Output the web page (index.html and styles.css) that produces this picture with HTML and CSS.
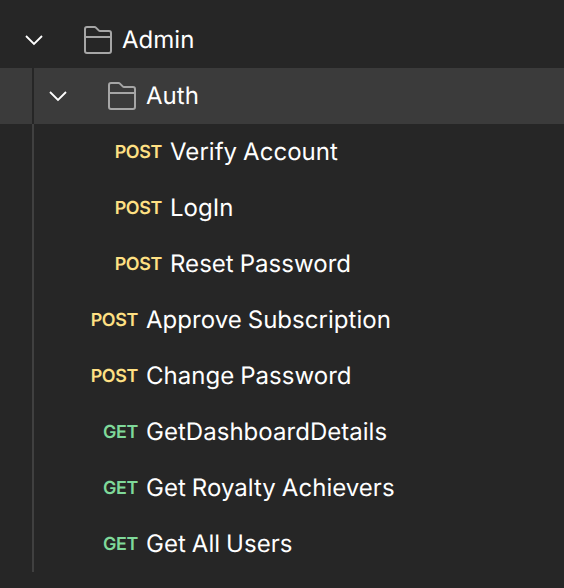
FILE: index.html
```html
<!DOCTYPE html>
<html lang="en">
<head>
<meta charset="utf-8">
<title>Collections</title>
<link rel="stylesheet" href="styles.css">
</head>
<body>
<ul class="tree">
  <li class="row">
    <svg class="chevron" viewBox="0 0 24 24"><path d="M4 8l8 8 8-8"/></svg>
    <svg class="folder" viewBox="0 0 30 30"><path d="M2 26V4a2 2 0 0 1 2-2h7.500a2 2 0 0 1 1.400.600l2.800 2.800a2 2 0 0 0 1.400.600H26a2 2 0 0 1 2 2v18a2 2 0 0 1-2 2H4a2 2 0 0 1-2-2zM2 12h26"/></svg>
    <span class="name">Admin</span>
  </li>
  <li>
    <ul class="children">
      <li class="row selected">
        <svg class="chevron" viewBox="0 0 24 24"><path d="M4 8l8 8 8-8"/></svg>
        <svg class="folder" viewBox="0 0 30 30"><path d="M2 26V4a2 2 0 0 1 2-2h7.500a2 2 0 0 1 1.400.600l2.800 2.800a2 2 0 0 0 1.400.600H26a2 2 0 0 1 2 2v18a2 2 0 0 1-2 2H4a2 2 0 0 1-2-2zM2 12h26"/></svg>
        <span class="name">Auth</span>
      </li>
      <li class="row nested"><span class="method post">POST</span><span class="name">Verify Account</span></li>
      <li class="row nested"><span class="method post">POST</span><span class="name">LogIn</span></li>
      <li class="row nested"><span class="method post">POST</span><span class="name">Reset Password</span></li>
      <li class="row"><span class="method post">POST</span><span class="name">Approve Subscription</span></li>
      <li class="row"><span class="method post">POST</span><span class="name">Change Password</span></li>
      <li class="row"><span class="method get">GET</span><span class="name">GetDashboardDetails</span></li>
      <li class="row"><span class="method get">GET</span><span class="name">Get Royalty Achievers</span></li>
      <li class="row"><span class="method get">GET</span><span class="name">Get All Users</span></li>
    </ul>
  </li>
</ul>
</body>
</html>
```

FILE: styles.css
```css
body {
  margin: 0;
  height: 588px;
  background: #262626;
  color: #fff;
  font-family: Inter, sans-serif;
  text-rendering: geometricPrecision;
  overflow: hidden;
}

ul {
  margin: 0;
  padding: 0;
  list-style: none;
}

.tree {
  padding-top: 12px;
}

.row {
  display: flex;
  align-items: center;
  height: 56px;
  padding-left: 22px;
}

.children {
  background: linear-gradient(#404040, #404040) 32px 0 / 2px 100% no-repeat;
}

.children .row {
  padding-left: 46px;
}

.selected {
  background: linear-gradient(90deg, transparent 32px, #262626 32px 34px, transparent 34px), #3b3b3b;
}

.chevron {
  width: 24px;
  height: 24px;
  margin-right: 37px;
  fill: none;
  stroke: #fff;
  stroke-width: 1.8;
}

.folder {
  width: 30px;
  height: 30px;
  margin-right: 9px;
  fill: none;
  stroke: #a6a6a6;
  stroke-width: 2;
}

.name {
  padding-bottom: 2px;
  font-size: 24px;
  font-weight: 370;
  letter-spacing: 0.03px;
  word-spacing: -0.8px;
  white-space: nowrap;
}

.method {
  width: 92px;
  margin-right: 8px;
  padding-top: 2px;
  text-align: right;
  font-size: 17.900px;
  font-weight: 600;
  line-height: 22px;
  letter-spacing: -0.350px;
}

.nested .method {
  width: 116px;
}

.post {
  color: #ffe083;
}

.get {
  color: #7fd99a;
}
```
